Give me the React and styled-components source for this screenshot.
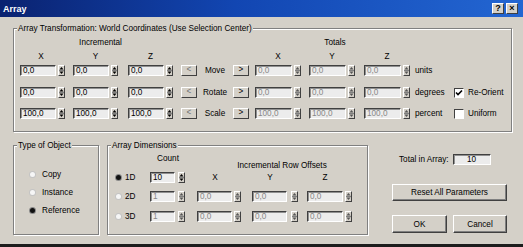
import React from "react";
import styled, { createGlobalStyle } from "styled-components";

const Global = createGlobalStyle`
  html, body {
    margin: 0;
    padding: 0;
    background: #d4d0c8;
  }
  body {
    font-family: "Liberation Sans", Arial, sans-serif;
    font-size: 8.2px;
    color: #000;
  }
`;

const Window = styled.div`
  width: 523px;
  height: 247px;
  box-sizing: border-box;
  background: #d4d0c8;
  display: flex;
  flex-direction: column;
  border-bottom: 3px solid #1c1c1c;
  overflow: hidden;
`;

const TitleBar = styled.div`
  height: 17px;
  flex: none;
  display: flex;
  align-items: center;
  padding: 0 5px 0 3px;
  background: linear-gradient(90deg, #0a2270 0%, #1246b2 45%, #2366d2 100%);
`;

const Title = styled.span`
  flex: 1;
  color: #fff;
  font-weight: bold;
  font-size: 9px;
`;

const CaptionButton = styled.div`
  width: 12px;
  height: 11px;
  box-sizing: border-box;
  margin-left: 2px;
  background: #d4d0c8;
  border: 1px solid;
  border-color: #fff #404040 #404040 #fff;
  display: flex;
  align-items: center;
  justify-content: center;
  font-size: 9px;
  font-weight: bold;
  line-height: 1;
`;

const Body = styled.div`
  display: flex;
  flex-direction: column;
  padding-left: 13px;
`;

const Group = styled.div`
  position: relative;
  box-sizing: border-box;
  width: ${(p) => p.$w}px;
  height: ${(p) => p.$h}px;
  margin-top: ${(p) => p.$mt || 0}px;
  margin-left: ${(p) => p.$ml || 0}px;
  padding-left: ${(p) => p.$pl || 0}px;
  border: 1px solid #808080;
  box-shadow: inset 1px 1px 0 #fff, 1px 1px 0 #fff;
  display: flex;
  flex-direction: column;
`;

const Legend = styled.span`
  position: absolute;
  top: -6px;
  left: 3px;
  padding: 0 1px;
  line-height: 11px;
  background: #d4d0c8;
  white-space: nowrap;
`;

const TRANSFORM_COLS = "53px 55px 53px 16px 36px 22px 54px 55px 51px 39px 1fr";

const Row = styled.div`
  display: grid;
  grid-template-columns: ${(p) => p.$cols};
  align-items: center;
  height: ${(p) => p.$h || 11}px;
  margin-top: ${(p) => p.$mt || 0}px;
`;

const Caption = styled.div`
  grid-column: ${(p) => p.$span};
  text-align: center;
  line-height: 10px;
  white-space: nowrap;
  align-self: ${(p) => p.$align || "center"};
`;

const AxisLabel = styled.div`
  width: ${(p) => p.$w}px;
  text-align: center;
  line-height: 10px;
`;

const SpinWrap = styled.div`
  display: flex;
  align-items: center;
`;

const Field = styled.div`
  width: ${(p) => p.$w}px;
  height: 11px;
  box-sizing: border-box;
  border: 1px solid;
  border-color: #404040 #fff #fff #404040;
  box-shadow: inset 1px 1px 0 #909090;
  background: #ececec;
  color: ${(p) => (p.$disabled ? "#888" : "#000")};
  padding-left: ${(p) => (p.$center ? 0 : 2)}px;
  text-align: ${(p) => (p.$center ? "center" : "left")};
  line-height: 9px;
  white-space: nowrap;
  overflow: hidden;
`;

const SpinBox = styled.div`
  width: 7px;
  height: 11px;
  box-sizing: border-box;
  margin-left: ${(p) => p.$gap}px;
  border: 1px solid;
  border-color: #fff #404040 #404040 #fff;
  background: #d4d0c8;
  display: flex;
`;

const Spinner = ({ gap = 2, dim }) => (
  <SpinBox $gap={gap}>
    <svg width="5" height="9" viewBox="0 0 5 9">
      <path d="M2.5 1 L4.5 3.5 H0.5 Z" fill={dim ? "#555" : "#000"} />
      <line x1="0" y1="4.5" x2="5" y2="4.5" stroke="#808080" />
      <path d="M0.5 5.5 H4.5 L2.5 8 Z" fill={dim ? "#555" : "#000"} />
    </svg>
  </SpinBox>
);

const SpinField = ({ value, w = 36, gap = 2, disabled }) => (
  <SpinWrap>
    <Field $w={w} $disabled={disabled}>
      {value}
    </Field>
    <Spinner gap={gap} dim={disabled} />
  </SpinWrap>
);

const ArrowButton = styled.div`
  width: 16px;
  height: 11px;
  box-sizing: border-box;
  border: 1px solid;
  border-color: #fff #404040 #404040 #fff;
  background: #d4d0c8;
  color: ${(p) => (p.$dim ? "#707070" : "#000")};
  display: flex;
  align-items: center;
  justify-content: center;
  line-height: 1;
`;

const OpLabel = styled.div`
  text-align: center;
`;

const Unit = styled.div`
  white-space: nowrap;
`;

const CheckOption = styled.label`
  display: flex;
  align-items: center;
  gap: 4px;
  white-space: nowrap;
`;

const Box = styled.span`
  width: 10px;
  height: 10px;
  box-sizing: border-box;
  border: 1px solid;
  border-color: #404040 #fff #fff #404040;
  background: #fff;
  display: flex;
  align-items: center;
  justify-content: center;
`;

const Checkbox = ({ checked, label }) => (
  <CheckOption>
    <Box>
      {checked && (
        <svg width="8" height="8" viewBox="0 0 8 8">
          <path d="M1 3.5 L3 5.5 L7 1.5" fill="none" stroke="#000" strokeWidth="1.6" />
        </svg>
      )}
    </Box>
    {label}
  </CheckOption>
);

const RadioOption = styled.div`
  display: flex;
  align-items: center;
  height: 10px;
  margin-top: ${(p) => p.$mt || 0}px;
  margin-left: ${(p) => p.$ml || 0}px;
  white-space: nowrap;
`;

const Dot = styled.span`
  width: 5px;
  height: 5px;
  border-radius: 50%;
  margin-right: ${(p) => p.$gap}px;
  background: ${(p) => (p.$on ? "#111" : "#f6f6f6")};
  box-shadow: 0 0 0 1px ${(p) => (p.$on ? "#888" : "#c4c4c4")};
`;

const Radio = ({ on, label, gap = 7, mt, ml }) => (
  <RadioOption $mt={mt} $ml={ml}>
    <Dot $on={on} $gap={gap} />
    {label}
  </RadioOption>
);

const BottomRow = styled.div`
  display: flex;
  margin-top: 13px;
`;

const DIM_COLS = "35px 47px 55px 55px 1fr";

const SideColumn = styled.div`
  width: 115px;
  margin-left: 24px;
  display: flex;
  flex-direction: column;
`;

const TotalRow = styled.div`
  display: flex;
  align-items: center;
  gap: 4px;
  margin: 9px 0 0 7px;
  white-space: nowrap;
`;

const Button = styled.div`
  width: ${(p) => p.$w}px;
  height: ${(p) => p.$h}px;
  box-sizing: border-box;
  margin-top: ${(p) => p.$mt || 0}px;
  border: 1px solid;
  border-color: #fff #404040 #404040 #fff;
  box-shadow: inset -1px -1px 0 #808080;
  background: #d4d0c8;
  display: flex;
  align-items: center;
  justify-content: center;
  white-space: nowrap;
`;

const ButtonRow = styled.div`
  display: flex;
  justify-content: space-between;
  margin-top: 14px;
`;

const rows = [
  { inc: ["0,0", "0,0", "0,0"], op: "Move", tot: ["0,0", "0,0", "0,0"], unit: "units" },
  { inc: ["0,0", "0,0", "0,0"], op: "Rotate", tot: ["0,0", "0,0", "0,0"], unit: "degrees", check: { label: "Re-Orient", checked: true } },
  { inc: ["100,0", "100,0", "100,0"], op: "Scale", tot: ["100,0", "100,0", "100,0"], unit: "percent", check: { label: "Uniform", checked: false } },
];

const rowTops = [3, 11, 10];

export default function App() {
  return (
    <Window>
      <Global />
      <TitleBar>
        <Title>Array</Title>
        <CaptionButton>?</CaptionButton>
        <CaptionButton>×</CaptionButton>
      </TitleBar>
      <Body>
        <Group $w={499} $h={104} $mt={11} $pl={6}>
          <Legend>Array Transformation: World Coordinates (Use Selection Center)</Legend>
          <Row $cols={TRANSFORM_COLS} $h={10} $mt={9}>
            <Caption $span="1 / 4">Incremental</Caption>
            <Caption $span="7 / 10">Totals</Caption>
          </Row>
          <Row $cols={TRANSFORM_COLS} $h={10} $mt={4}>
            <AxisLabel $w={42}>X</AxisLabel>
            <AxisLabel $w={45}>Y</AxisLabel>
            <AxisLabel $w={45}>Z</AxisLabel>
            <span />
            <span />
            <span />
            <AxisLabel $w={46}>X</AxisLabel>
            <AxisLabel $w={46}>Y</AxisLabel>
            <AxisLabel $w={46}>Z</AxisLabel>
          </Row>
          {rows.map((r, i) => (
            <Row key={r.op} $cols={TRANSFORM_COLS} $mt={rowTops[i]}>
              {r.inc.map((v, j) => (
                <SpinField key={j} value={v} />
              ))}
              <ArrowButton $dim>&lt;</ArrowButton>
              <OpLabel>{r.op}</OpLabel>
              <ArrowButton>&gt;</ArrowButton>
              {r.tot.map((v, j) => (
                <SpinField key={j} value={v} w={37} disabled />
              ))}
              <Unit>{r.unit}</Unit>
              {r.check ? <Checkbox checked={r.check.checked} label={r.check.label} /> : <span />}
            </Row>
          ))}
        </Group>

        <BottomRow>
          <Group $w={86} $h={90} $pl={16}>
            <Legend>Type of Object</Legend>
            <Radio label="Copy" mt={23} />
            <Radio label="Instance" mt={8} />
            <Radio label="Reference" mt={8} on />
          </Group>

          <Group $w={261} $h={90} $ml={8} $pl={7}>
            <Legend>Array Dimensions</Legend>
            <Row $cols={DIM_COLS} $h={17} $mt={8}>
              <span />
              <Caption $span="2 / 3" $align="start">
                <AxisLabel $w={36}>Count</AxisLabel>
              </Caption>
              <Caption $span="3 / 6" $align="end">
                Incremental Row Offsets
              </Caption>
            </Row>
            <Row $cols={DIM_COLS} $mt={1}>
              <Radio label="1D" on gap={4} ml={1} />
              <SpinField value="10" w={25} gap={3} />
              <AxisLabel $w={36}>X</AxisLabel>
              <AxisLabel $w={36}>Y</AxisLabel>
              <AxisLabel $w={36}>Z</AxisLabel>
            </Row>
            {["2D", "3D"].map((d, i) => (
              <Row key={d} $cols={DIM_COLS} $mt={i === 0 ? 8 : 9}>
                <Radio label={d} gap={4} ml={1} />
                <SpinField value="1" w={25} gap={3} disabled />
                <SpinField value="0,0" w={35} disabled />
                <SpinField value="0,0" w={35} gap={4} disabled />
                <SpinField value="0,0" w={36} disabled />
              </Row>
            ))}
          </Group>

          <SideColumn>
            <TotalRow>
              Total in Array:
              <Field $w={38} $center>
                10
              </Field>
            </TotalRow>
            <Button $w={115} $h={17} $mt={19}>
              Reset All Parameters
            </Button>
            <ButtonRow>
              <Button $w={55} $h={18}>
                OK
              </Button>
              <Button $w={54} $h={18}>
                Cancel
              </Button>
            </ButtonRow>
          </SideColumn>
        </BottomRow>
      </Body>
    </Window>
  );
}
